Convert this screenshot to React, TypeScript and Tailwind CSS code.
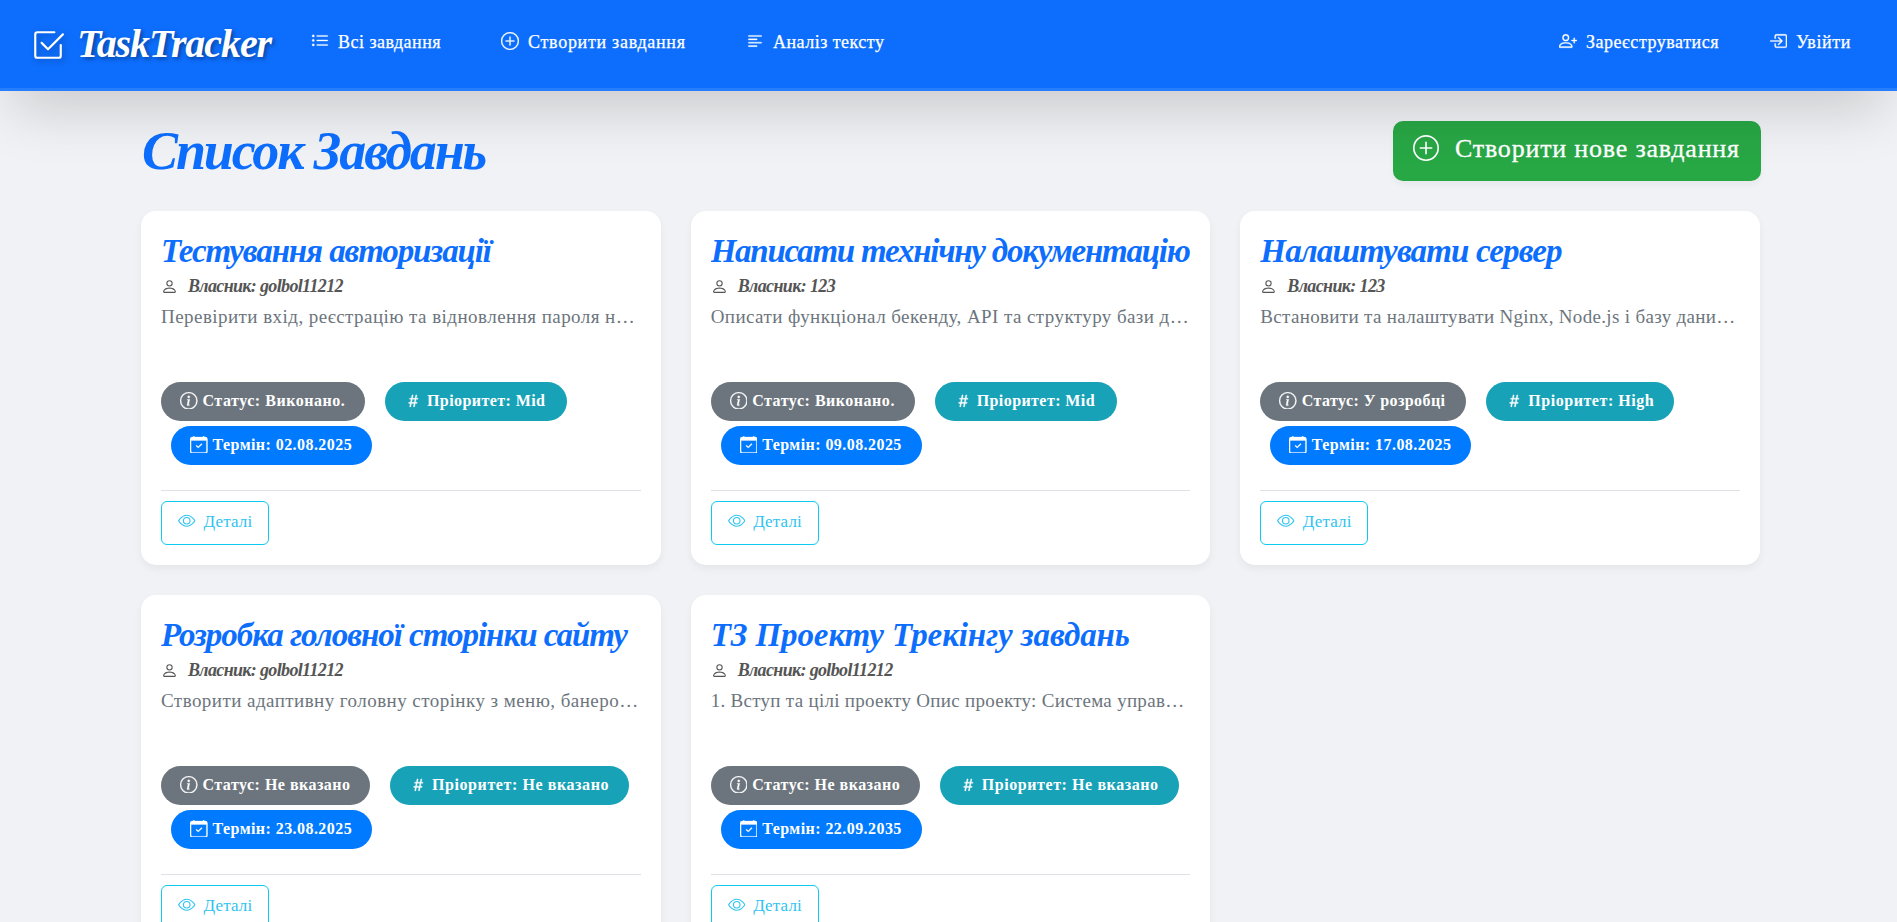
import type { ReactNode } from "react";
import {
  BsBoxArrowInRight,
  BsCalendarCheck,
  BsCheck2Square,
  BsEye,
  BsHash,
  BsInfoCircle,
  BsListUl,
  BsPerson,
  BsPersonPlus,
  BsPlusCircle,
  BsTextLeft,
} from "react-icons/bs";

type Label = { text: string; cls: string };

type Task = {
  title: Label;
  owner: Label;
  description: Label;
  status: Label;
  priority: Label;
  due: string;
};

const golbol: Label = { text: "Власник: golbol11212", cls: "tracking-[-0.65px]" };
const user123: Label = { text: "Власник: 123", cls: "tracking-[-0.62px]" };

const tasks: Task[] = [
  {
    title: { text: "Тестування авторизації", cls: "tracking-[-1.1px]" },
    owner: golbol,
    description: { text: "Перевірити вхід, реєстрацію та відновлення пароля н…", cls: "tracking-[0.45px]" },
    status: { text: "Статус: Виконано.", cls: "w-[204px] tracking-[0.52px]" },
    priority: { text: "Пріоритет: Mid", cls: "w-[182px] tracking-[0.42px]" },
    due: "02.08.2025",
  },
  {
    title: { text: "Написати технічну документацію", cls: "tracking-[-1.24px]" },
    owner: user123,
    description: { text: "Описати функціонал бекенду, API та структуру бази д…", cls: "tracking-[0.42px]" },
    status: { text: "Статус: Виконано.", cls: "w-[204px] tracking-[0.52px]" },
    priority: { text: "Пріоритет: Mid", cls: "w-[182px] tracking-[0.42px]" },
    due: "09.08.2025",
  },
  {
    title: { text: "Налаштувати сервер", cls: "tracking-[-0.86px]" },
    owner: user123,
    description: { text: "Встановити та налаштувати Nginx, Node.js і базу дани…", cls: "tracking-[0.33px]" },
    status: { text: "Статус: У розробці", cls: "w-[206px] tracking-[0.41px]" },
    priority: { text: "Пріоритет: High", cls: "w-[188px] tracking-[0.54px]" },
    due: "17.08.2025",
  },
  {
    title: { text: "Розробка головної сторінки сайту", cls: "tracking-[-1.01px]" },
    owner: golbol,
    description: { text: "Створити адаптивну головну сторінку з меню, банеро…", cls: "tracking-[0.45px]" },
    status: { text: "Статус: Не вказано", cls: "w-[209px] tracking-[0.48px]" },
    priority: { text: "Пріоритет: Не вказано", cls: "w-[239px] tracking-[0.58px]" },
    due: "23.08.2025",
  },
  {
    title: { text: "ТЗ Проекту Трекінгу завдань", cls: "tracking-[-0.11px]" },
    owner: golbol,
    description: { text: "1. Вступ та цілі проекту Опис проекту: Система управ…", cls: "tracking-[0.29px]" },
    status: { text: "Статус: Не вказано", cls: "w-[209px] tracking-[0.48px]" },
    priority: { text: "Пріоритет: Не вказано", cls: "w-[239px] tracking-[0.58px]" },
    due: "22.09.2035",
  },
];

function NavLink({ icon, label, cls, textCls }: { icon: ReactNode; label: string; cls: string; textCls: string }) {
  return (
    <a
      href="#"
      className={"flex h-[84px] shrink-0 items-center whitespace-nowrap text-[18px] text-white " + cls}
    >
      <span className="mb-[3px] flex shrink-0">{icon}</span>
      <span className={"shrink-0 [-webkit-text-stroke:0.25px_white] " + textCls}>{label}</span>
    </a>
  );
}

function Pill({ icon, label, cls }: { icon: ReactNode; label: string; cls: string }) {
  return (
    <span
      className={
        "flex h-[39px] shrink-0 items-center gap-[5px] whitespace-nowrap rounded-[20px] pb-[2px] pl-[19px] text-[16px] font-bold text-white " +
        cls
      }
    >
      {icon}
      <span>{label}</span>
    </span>
  );
}

function TaskCard({ task }: { task: Task }) {
  return (
    <article className="flex h-[354px] flex-col rounded-[15px] bg-white p-5 shadow-[0_4px_8px_rgba(0,0,0,0.05)]">
      <h2
        className={
          "h-[38px] overflow-hidden whitespace-nowrap text-[33px] font-bold italic leading-[40px] text-[#0d6efd] " +
          task.title.cls
        }
      >
        {task.title.text}
      </h2>
      <div className="mt-[7px] flex h-5 items-center text-[#555]">
        <BsPerson className="mr-[10px] h-[17px] w-[17px]" />
        <span className={"whitespace-nowrap text-[18px] font-bold italic leading-5 " + task.owner.cls}>
          {task.owner.text}
        </span>
      </div>
      <p
        className={
          "mt-[7px] h-[27px] whitespace-nowrap text-[19px] leading-[27px] text-[#6c757d] " + task.description.cls
        }
      >
        {task.description.text}
      </p>
      <div className="mt-[52px] flex flex-wrap gap-y-[5px]">
        <Pill
          icon={<BsInfoCircle className="h-[17.5px] w-[17.5px]" stroke="currentColor" strokeWidth={0.3} />}
          label={task.status.text}
          cls={"mr-5 bg-[#6c757d] " + task.status.cls}
        />
        <Pill
          icon={<BsHash className="h-[18px] w-[18px]" stroke="currentColor" strokeWidth={0.3} />}
          label={task.priority.text}
          cls={"bg-[#17a2b8] " + task.priority.cls}
        />
        <Pill
          icon={<BsCalendarCheck className="h-[17.5px] w-[17.5px]" stroke="currentColor" strokeWidth={0.3} />}
          label={"Термін: " + task.due}
          cls="ml-[10px] w-[201px] bg-[#007bff] tracking-[0.44px]"
        />
      </div>
      <div className="mt-[25px] border-t border-[#dee2e6] pt-[10px]">
        <a
          href="#"
          className="flex h-11 w-[108px] items-center rounded-[6px] border border-[#0dcaf0] pb-[2px] pl-4 text-[17px] tracking-[0.15px] text-[#2fc3f0]"
        >
          <BsEye className="mr-2 mb-[3px] h-[17.5px] w-[17.5px]" />
          <span>Деталі</span>
        </a>
      </div>
    </article>
  );
}

export default function App() {
  return (
    <div className="h-[922px] overflow-hidden bg-[#f0f2f5] font-['Liberation_Serif',serif]">
      <header className="relative z-10 flex h-[91px] border-b-[3px] border-[#267dfd] bg-[#0d6efd] shadow-[0_30px_56px_-12px_rgba(0,0,0,0.17)]">
        <a
          href="#"
          className="ml-[31px] flex h-[88px] shrink-0 items-center text-[40px] font-bold italic tracking-[-1.08px] text-white"
        >
          <BsCheck2Square className="mr-3 mt-px h-[34px] w-[34px] drop-shadow-[2px_2px_3px_rgba(0,0,0,0.3)]" />
          <span className="w-[194px] whitespace-nowrap [text-shadow:2px_2px_4px_rgba(0,0,0,0.4)]">TaskTracker</span>
        </a>
        <nav className="flex grow">
          <NavLink
            icon={<BsListUl className="h-[18px] w-[18px]" stroke="currentColor" strokeWidth={0.3} />}
            label="Всі завдання"
            cls="ml-10 gap-[9px]"
            textCls="w-[103px] tracking-[0.47px]"
          />
          <NavLink
            icon={<BsPlusCircle className="h-[18px] w-[18px]" stroke="currentColor" strokeWidth={0.3} />}
            label="Створити завдання"
            cls="ml-[60px] gap-[9px]"
            textCls="w-[157px] tracking-[0.72px]"
          />
          <NavLink
            icon={<BsTextLeft className="h-[18px] w-[18px]" stroke="currentColor" strokeWidth={0.3} />}
            label="Аналіз тексту"
            cls="ml-[61px] gap-[9px]"
            textCls="w-[111px] tracking-[0.48px]"
          />
          <NavLink
            icon={<BsPersonPlus className="h-[18px] w-[18px]" stroke="currentColor" strokeWidth={0.3} />}
            label="Зареєструватися"
            cls="ml-auto gap-[9px]"
            textCls="w-[133px] tracking-[0.53px]"
          />
          <NavLink
            icon={<BsBoxArrowInRight className="h-[18px] w-[18px]" stroke="currentColor" strokeWidth={0.3} />}
            label="Увійти"
            cls="mr-[46px] ml-[50px] gap-[9px]"
            textCls="w-[55px] tracking-[0.61px]"
          />
        </nav>
      </header>
      <main className="ml-[141px] w-[1619px] pt-[30px]">
        <div className="-mr-px mb-[30px] flex h-[60px] items-center justify-between">
          <h1 className="whitespace-nowrap pl-px text-[54px] font-bold italic leading-[60px] tracking-[-2.1px] text-[#0d6efd]">
            Список Завдань
          </h1>
          <a
            href="#"
            className="flex h-[60px] w-[368px] items-center gap-4 whitespace-nowrap rounded-[10px] bg-[#28a745] pb-[6px] pl-5 text-[26px] tracking-[0.8px] text-white shadow-[0_4px_6px_rgba(0,0,0,0.04)]"
          >
            <BsPlusCircle className="mb-px h-[26px] w-[26px]" />
            <span className="[-webkit-text-stroke:0.3px_white]">Створити нове завдання</span>
          </a>
        </div>
        <div className="grid grid-cols-3 gap-[30px]">
          {tasks.map((task) => (
            <TaskCard key={task.title.text} task={task} />
          ))}
        </div>
      </main>
    </div>
  );
}
